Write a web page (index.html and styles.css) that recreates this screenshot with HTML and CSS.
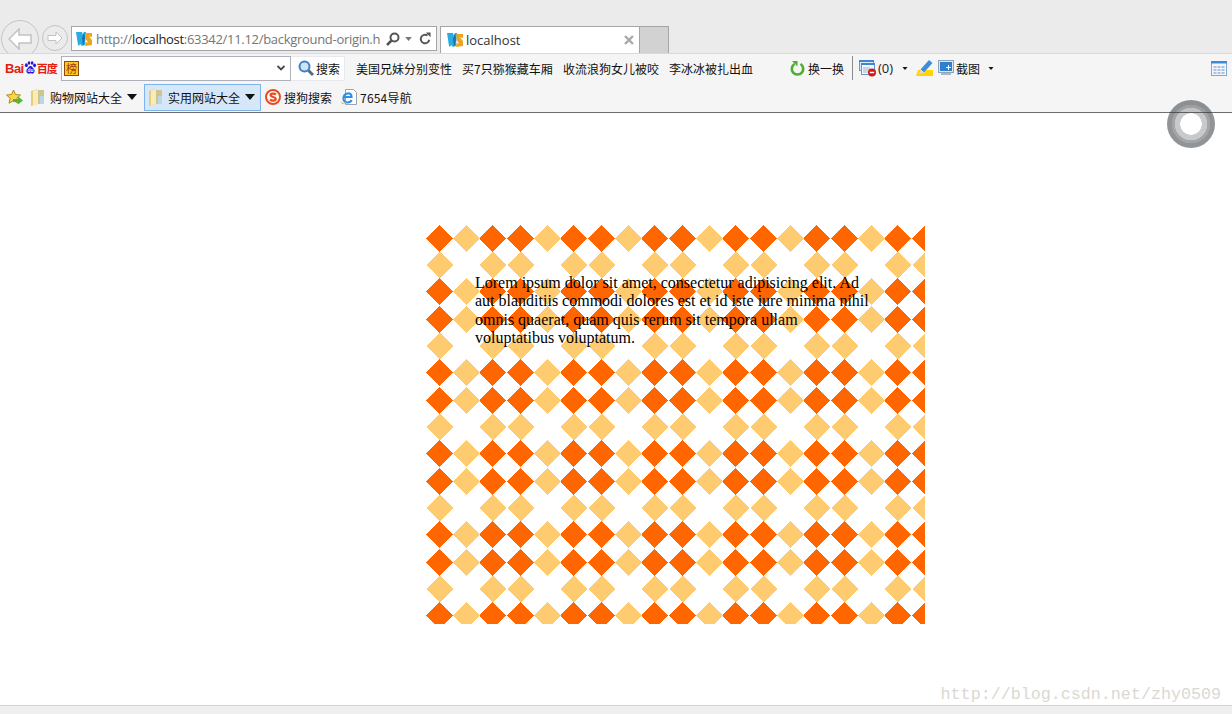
FILE: index.html
```html
<!DOCTYPE html>
<html>
  <head>
    <meta charset="utf-8" />
    <title>localhost</title>
    <link rel="stylesheet" href="styles.css">
  </head>
  <body>
    <svg class="defs" width="0" height="0">
      <symbol id="ws" viewBox="0 0 16 16">
        <path fill="#27aee0" d="M0 1h6l1 3 1-3h2l-1 13-3 1-2-2-1 2-1-1z"/>
        <path fill="#1a6fb5" d="M6 7l1-3 1-3 1 6-1 6-1 1z"/>
        <path fill="#eda51f" d="M9.500 2H16v4l-3-.5L16 9v5l-7 1 .5-4 2.500.5L9.500 8z"/>
      </symbol>
      <symbol id="folder" viewBox="0 0 13 17">
        <path fill="#e4ce7e" d="M0 2l7-2v15l-7 2z"/>
        <path fill="#f8ecb8" d="M2 2l5-2v15l-5 1.500z"/>
        <path fill="#cfc48e" d="M7 1h6v14H7z"/>
        <path fill="#bcd6e6" d="M9 7h4v8H9z"/>
      </symbol>
      <symbol id="caret" viewBox="0 0 10 6">
        <path fill="#111" d="M0 0h10L5 6z"/>
      </symbol>
    </svg>

    <header class="title-bar">
      <div class="nav-back">
        <svg width="24" height="22" viewBox="0 0 24 22"><path fill="#fff" stroke="#c2c2c2" stroke-width="1.500" d="M11 1L1 11l10 10v-6h12V7H11z"/></svg>
      </div>
      <div class="nav-forward">
        <svg width="16" height="14" viewBox="0 0 16 14"><path fill="#fff" stroke="#c2c2c2" d="M9 1l6 6-6 6V9.500H1v-5h8z"/></svg>
      </div>
      <div class="address">
        <svg class="fav" width="16" height="16"><use href="#ws"/></svg>
        <div class="url"><span class="url-dim">http://</span>localhost<span class="url-dim">:63342/11.12/background-origin.h</span></div>
        <svg class="addr-icon" width="14" height="14" viewBox="0 0 14 14"><circle cx="8.500" cy="5.500" r="4" fill="none" stroke="#555" stroke-width="2"/><path stroke="#555" stroke-width="2.500" d="M5.500 8.500L1 13"/></svg>
        <svg class="addr-caret" width="7" height="4" viewBox="0 0 10 6"><path fill="#777" d="M0 0h10L5 6z"/></svg>
        <svg class="addr-reload" width="12" height="13" viewBox="0 0 14 14"><path fill="none" stroke="#555" stroke-width="2.200" d="M12 8.500A5 5 0 1 1 10 3.500"/><path fill="#555" d="M8 0h5.500v5.500z"/></svg>
      </div>
      <div class="tab">
        <svg class="fav" width="16" height="16"><use href="#ws"/></svg>
        <span class="tab-title">localhost</span>
        <svg class="tab-close" width="10" height="10" viewBox="0 0 10 10"><path stroke="#a8a8a8" stroke-width="2.400" d="M1 1l8 8M9 1l-8 8"/></svg>
      </div>
      <div class="tab-new"></div>
    </header>

    <section class="toolbars">
      <div class="row row-search">
        <div class="baidu">
          <span class="baidu-text">Bai</span>
          <svg width="13" height="16" viewBox="0 0 16 17"><g fill="#2319dc"><ellipse cx="3" cy="5" rx="1.800" ry="2.300"/><ellipse cx="6.200" cy="2.300" rx="1.600" ry="2.200"/><ellipse cx="10" cy="2.300" rx="1.600" ry="2.200"/><ellipse cx="13" cy="5.200" rx="1.800" ry="2.300"/><path d="M8 6c2 0 2.500 2 4 3.500 2 2 1 6-2 6-1 0-1.200-.4-2-.4s-1 .4-2 .4c-3 0-4-4-2-6C5.500 8 6 6 8 6z"/></g><text x="8" y="14" class="baidu-du">du</text></svg>
          <span class="baidu-cn">百度</span>
        </div>
        <div class="search-box">
          <span class="rank">榜</span>
          <svg class="chevron" width="8" height="6" viewBox="0 0 8 6"><path fill="none" stroke="#444" stroke-width="1.800" d="M.500 1L4 4.500 7.500 1"/></svg>
        </div>
        <div class="search-btn">
          <svg width="16" height="16" viewBox="0 0 16 16"><circle cx="6.500" cy="6.500" r="5" fill="#cfe3f7" stroke="#3f7fc4" stroke-width="2"/><path stroke="#5a6b80" stroke-width="3" d="M10.500 10.500L15 15"/></svg>
          <span>搜索</span>
        </div>
        <nav class="news">
          <a class="news-1">美国兄妹分别变性</a>
          <a class="news-2">买7只猕猴藏车厢</a>
          <a class="news-3">收流浪狗女儿被咬</a>
          <a class="news-4">李冰冰被扎出血</a>
        </nav>
        <div class="swap">
          <svg width="15" height="15" viewBox="0 0 15 15"><path fill="none" stroke="#4cae2c" stroke-width="2.600" d="M4.500 3a5.700 5.700 0 1 0 6 0"/><path fill="#4cae2c" d="M2 0h5.500v5.500z"/></svg>
          <span>换一换</span>
        </div>
        <div class="sep"></div>
        <div class="blocker">
          <svg width="18" height="17" viewBox="0 0 18 17"><rect x=".500" y=".500" width="14" height="10" fill="#dce9f7" stroke="#6d95c0"/><rect x="2.500" y="3.500" width="13" height="11" fill="#f3f7fb" stroke="#6d95c0"/><path fill="#3d87d6" d="M0 0h15v2H0zM2 3h14v2H2z"/><path stroke="#9db3c9" d="M4 8h7M4 10h6M4 12h5"/><circle cx="13" cy="12.500" r="4" fill="#d01818"/><path stroke="#fff" stroke-width="1.500" d="M10.800 12.500h4.400"/></svg>
          <span class="count">(0)</span>
          <svg class="mini-caret" width="6" height="3"><use href="#caret"/></svg>
        </div>
        <svg class="pen" width="17" height="16" viewBox="0 0 17 16"><path fill="#ffd400" d="M2 10h3l-1 2 4 1 2-3h7v6H0z"/><path fill="#3c8fe0" d="M13 0l3.500 3L8 12.500 4.500 9.500z"/><path fill="#f0d6a8" d="M4.500 9.500L8 12.500 2.500 14.500z"/></svg>
        <div class="shot">
          <svg width="16" height="16" viewBox="0 0 16 16"><rect x=".500" y=".500" width="15" height="12" fill="#dfe6ee" stroke="#8fa3b8"/><rect x="2" y="2" width="12" height="9" fill="#2f7fcf"/><path stroke="#fff" d="M10.500 5v5M8 7.500h5"/><path fill="#aab8c6" d="M3 13h10v2H3z"/></svg>
          <span>截图</span>
          <svg class="mini-caret shot-caret" width="6" height="3"><use href="#caret"/></svg>
        </div>
        <svg class="grid-icon" width="16" height="15" viewBox="0 0 16 15"><rect x=".500" y=".500" width="15" height="14" fill="#f3f7fb" stroke="#7fa8d2"/><path fill="#3f8ad6" d="M0 0h16v2.500H0z"/><path fill="#a9c4e0" d="M2.500 5h3v2h-3zM6.500 5h3v2h-3zM10.500 5h3v2h-3zM2.500 8h3v2h-3zM6.500 8h3v2h-3zM10.500 8h3v2h-3zM2.500 11h3v2h-3zM6.500 11h3v2h-3zM10.500 11h3v2h-3z"/></svg>
      </div>

      <div class="row row-links">
        <svg class="star" width="17" height="16" viewBox="0 0 17 16"><path fill="#f7d64a" stroke="#b08a1e" d="M7.500 1l2 4.500 5 .5-3.700 3.200 1.200 5L7.500 11.600 3 14.200l1.200-5L.500 6l5-.5z"/><path fill="#56b53a" d="M7 10h5V7.500l5 4-5 4V13H7z"/></svg>
        <div class="link-group">
          <svg width="13" height="17"><use href="#folder"/></svg>
          <span>购物网站大全</span>
          <svg class="caret" width="10" height="6"><use href="#caret"/></svg>
        </div>
        <div class="link-group active">
          <svg width="13" height="17"><use href="#folder"/></svg>
          <span>实用网站大全</span>
          <svg class="caret" width="10" height="6"><use href="#caret"/></svg>
        </div>
        <div class="link sogou">
          <svg width="16" height="16" viewBox="0 0 16 16"><circle cx="8" cy="8" r="7" fill="#fff" stroke="#ea4a1f" stroke-width="2"/><path fill="none" stroke="#ea4a1f" stroke-width="2.200" d="M11 5.500C9.500 4.300 5.500 4.300 5.500 6.200S10.800 8 10.800 10 6.500 12 5 10.700"/></svg>
          <span>搜狗搜索</span>
        </div>
        <div class="link nav7654">
          <svg width="16" height="16" viewBox="0 0 16 16"><path fill="#fff" stroke="#9aa5b1" d="M4.500 .500h8l3 3v12h-11z"/><path fill="none" stroke="#2f8fe0" stroke-width="2.200" d="M2.500 8h8C10.500 5 8.500 4 6.500 4.500S2.500 7 2.500 9.500s2 4 4 4 3.500-1 4-2.500"/><path fill="none" stroke="#e6b422" d="M1 13C0 15 2 15.500 5 13"/></svg>
          <span class="nav7654-text">7654导航</span>
        </div>
      </div>
    </section>

    <div class="loader"></div>

    <main class="page">
      <div class="box">
        Lorem ipsum dolor sit amet, consectetur adipisicing elit. Ad aut blanditiis commodi dolores est et id iste iure minima nihil omnis quaerat, quam quis rerum sit tempora ullam voluptatibus voluptatum.
      </div>
      <div class="watermark">http://blog.csdn.net/zhy0509</div>
    </main>

    <footer class="status-bar"></footer>
  </body>
</html>
```

FILE: styles.css
```css
html, body {
  margin: 0;
  height: 100%;
  overflow: hidden;
}
body {
  display: flex;
  flex-direction: column;
  height: 714px;
  position: relative;
  background: #fff;
}
.defs {
  position: absolute;
}

/* browser title bar */
.title-bar {
  height: 53px;
  flex: none;
  background: #ebebeb;
  border-bottom: 1px solid #d9d9d9;
  display: flex;
  align-items: flex-start;
  overflow: hidden;
  font-family: "Open Sans", sans-serif;
}
.nav-back {
  width: 36px;
  height: 36px;
  flex: none;
  margin: 20px 0 0 1px;
  border: 1px solid #c4c4c4;
  border-radius: 50%;
  display: flex;
  justify-content: center;
  align-items: center;
}
.nav-forward {
  width: 24px;
  height: 24px;
  flex: none;
  margin: 25px 0 0 3px;
  border: 1px solid #c4c4c4;
  border-radius: 50%;
  display: flex;
  justify-content: center;
  align-items: center;
}
.address {
  width: 364px;
  height: 23px;
  flex: none;
  margin: 26px 0 0 3px;
  background: #fff;
  border: 1px solid #a5a5a5;
  display: flex;
  align-items: center;
}
.fav {
  flex: none;
  margin-left: 4px;
}
.url {
  width: 285px;
  margin-left: 4px;
  font-size: 13px;
  letter-spacing: -0.3px;
  color: #222;
  white-space: nowrap;
}
.url-dim {
  color: #767676;
}
.addr-icon {
  flex: none;
  margin-left: 5px;
}
.addr-caret {
  flex: none;
  margin: 0 7px 0 5px;
}
.addr-reload {
  flex: none;
}
.tab {
  width: 198px;
  height: 26px;
  flex: none;
  margin: 26px 0 0 3px;
  background: #fff;
  border: 1px solid #a5a5a5;
  border-bottom: 0;
  display: flex;
  align-items: center;
}
.tab .fav {
  margin-left: 6px;
}
.tab-title {
  margin-left: 3px;
  font-size: 13px;
  color: #333;
  flex: 1;
}
.tab-close {
  flex: none;
  margin-right: 5px;
}
.tab-new {
  width: 28px;
  height: 26px;
  flex: none;
  margin-top: 26px;
  background: #d2d2d2;
  border: 1px solid #a5a5a5;
  border-width: 1px 1px 0 0;
}

/* toolbars */
.toolbars {
  height: 58px;
  flex: none;
  background: #f5f5f5;
  border-bottom: 1px solid #6e6e6e;
  font-family: "Noto Sans CJK SC", sans-serif;
  font-size: 12px;
  color: #111;
}
.row {
  display: flex;
  align-items: center;
}
.row-search {
  height: 28px;
}
.row-links {
  height: 30px;
}
.baidu {
  width: 56px;
  flex: none;
  margin-left: 5px;
  display: flex;
  align-items: center;
  color: #e3200f;
  font-weight: bold;
  font-family: "Liberation Sans", sans-serif;
}
.baidu-text {
  font-size: 13px;
  letter-spacing: -0.5px;
}
.baidu-du {
  font-size: 6px;
  fill: #fff;
  text-anchor: middle;
  font-family: "Liberation Sans", sans-serif;
}
.baidu-cn {
  font-size: 11px;
  letter-spacing: -1px;
  font-family: "Noto Sans CJK SC", sans-serif;
}
.search-box {
  width: 228px;
  height: 23px;
  flex: none;
  background: #fff;
  border: 1px solid #aeb1ba;
  display: flex;
  align-items: center;
  justify-content: space-between;
}
.rank {
  width: 13px;
  height: 13px;
  margin-left: 2px;
  background: #ffc81e;
  border: 1px solid #8a4a10;
  color: #a03a10;
  font-size: 11px;
  line-height: 13px;
  text-align: center;
  overflow: hidden;
}
.chevron {
  margin-right: 5px;
}
.search-btn {
  width: 54px;
  height: 25px;
  flex: none;
  box-sizing: border-box;
  background: #fff;
  border: 1px solid #e6eaf0;
  border-left: 0;
  display: flex;
  align-items: center;
  padding-left: 7px;
  gap: 2px;
}
.news {
  width: 432px;
  flex: none;
  margin-left: 11px;
  display: flex;
  white-space: nowrap;
}
.news-1 { width: 106px; }
.news-2 { width: 101px; }
.news-3 { width: 106px; }
.swap {
  width: 59px;
  flex: none;
  display: flex;
  align-items: center;
  gap: 3px;
  margin-left: 2px;
}
.sep {
  width: 1px;
  height: 24px;
  flex: none;
  margin-left: 3px;
  background: #8c8c8c;
}
.blocker {
  width: 57px;
  flex: none;
  margin-left: 6px;
  display: flex;
  align-items: center;
  gap: 1px;
  color: #222;
}
.count {
  font-family: "Open Sans", sans-serif;
  font-size: 13px;
}
.mini-caret {
  flex: none;
  margin-left: 8px;
}
.pen {
  flex: none;
}
.shot {
  flex: none;
  margin-left: 5px;
  display: flex;
  align-items: center;
  gap: 2px;
}
.shot-caret {
  margin-left: 6px;
}
.grid-icon {
  flex: none;
  margin-left: auto;
  margin-right: 5px;
}
.star {
  flex: none;
  margin-left: 6px;
}
.link-group {
  height: 27px;
  flex: none;
  box-sizing: border-box;
  display: flex;
  align-items: center;
  margin-left: 8px;
  gap: 6px;
}
.link-group .caret {
  margin-left: -1px;
}
.link-group.active {
  width: 117px;
  margin-left: 7px;
  padding-left: 4px;
  background: #d5e7f8;
  border: 1px solid #7eb4ea;
}
.link {
  display: flex;
  align-items: center;
  flex: none;
  gap: 3px;
}
.sogou {
  margin-left: 4px;
}
.nav7654 {
  margin-left: 9px;
}
.nav7654-text {
  letter-spacing: 0.2px;
}

/* floating button that hangs over the toolbar edge */
.loader {
  position: absolute;
  left: 1167px;
  top: 100px;
  width: 48px;
  height: 48px;
  border-radius: 50%;
  background: radial-gradient(circle, #fff 0 10.5px, rgba(50, 58, 62, 0.27) 11px 16px, rgba(50, 58, 62, 0.45) 16.5px 19px, rgba(50, 58, 62, 0.54) 19.5px);
}

/* page content */
.page {
  flex: 1;
  position: relative;
}
.box {
  width: 499px;
  height: 399px;
  box-sizing: border-box;
  margin: 112px 0 0 426px;
  padding: 49px 50px 0 49px;
  font-family: "Liberation Serif", serif;
  font-size: 16px;
  line-height: 18.4px;
  color: #000;
  background-image: url("data:image/svg+xml,%3Csvg xmlns='http://www.w3.org/2000/svg' width='81' height='81' shape-rendering='crispEdges'%3E%3Cg fill='%23ff6600'%3E%3Cpath d='M13.5 0l13.500 13.500-13.500 13.500L0 13.500z'/%3E%3Cpath d='M66.500 0L80 13.500 66.500 27 53 13.500z'/%3E%3Cpath d='M13.500 53L27 66.500 13.500 80 0 66.500z'/%3E%3Cpath d='M66.500 53L80 66.500 66.500 80 53 66.500z'/%3E%3C/g%3E%3Cg fill='%23ffcb70'%3E%3Cpath d='M40 0l13.500 13.500L40 27 26.500 13.500z'/%3E%3Cpath d='M13.500 26.500L27 40 13.500 53.500 0 40z'/%3E%3Cpath d='M66.500 26.500L80 40 66.500 53.500 53 40z'/%3E%3Cpath d='M40 53l13.500 13.500L40 80 26.500 66.500z'/%3E%3C/g%3E%3C/svg%3E");
}
.watermark {
  position: absolute;
  right: 11px;
  bottom: 1px;
  font-family: "Liberation Mono", monospace;
  font-size: 16.7px;
  color: #d9d9d2;
  white-space: nowrap;
}
.status-bar {
  height: 8px;
  flex: none;
  background: #efefef;
  border-top: 1px solid #d4d4d4;
}
```
